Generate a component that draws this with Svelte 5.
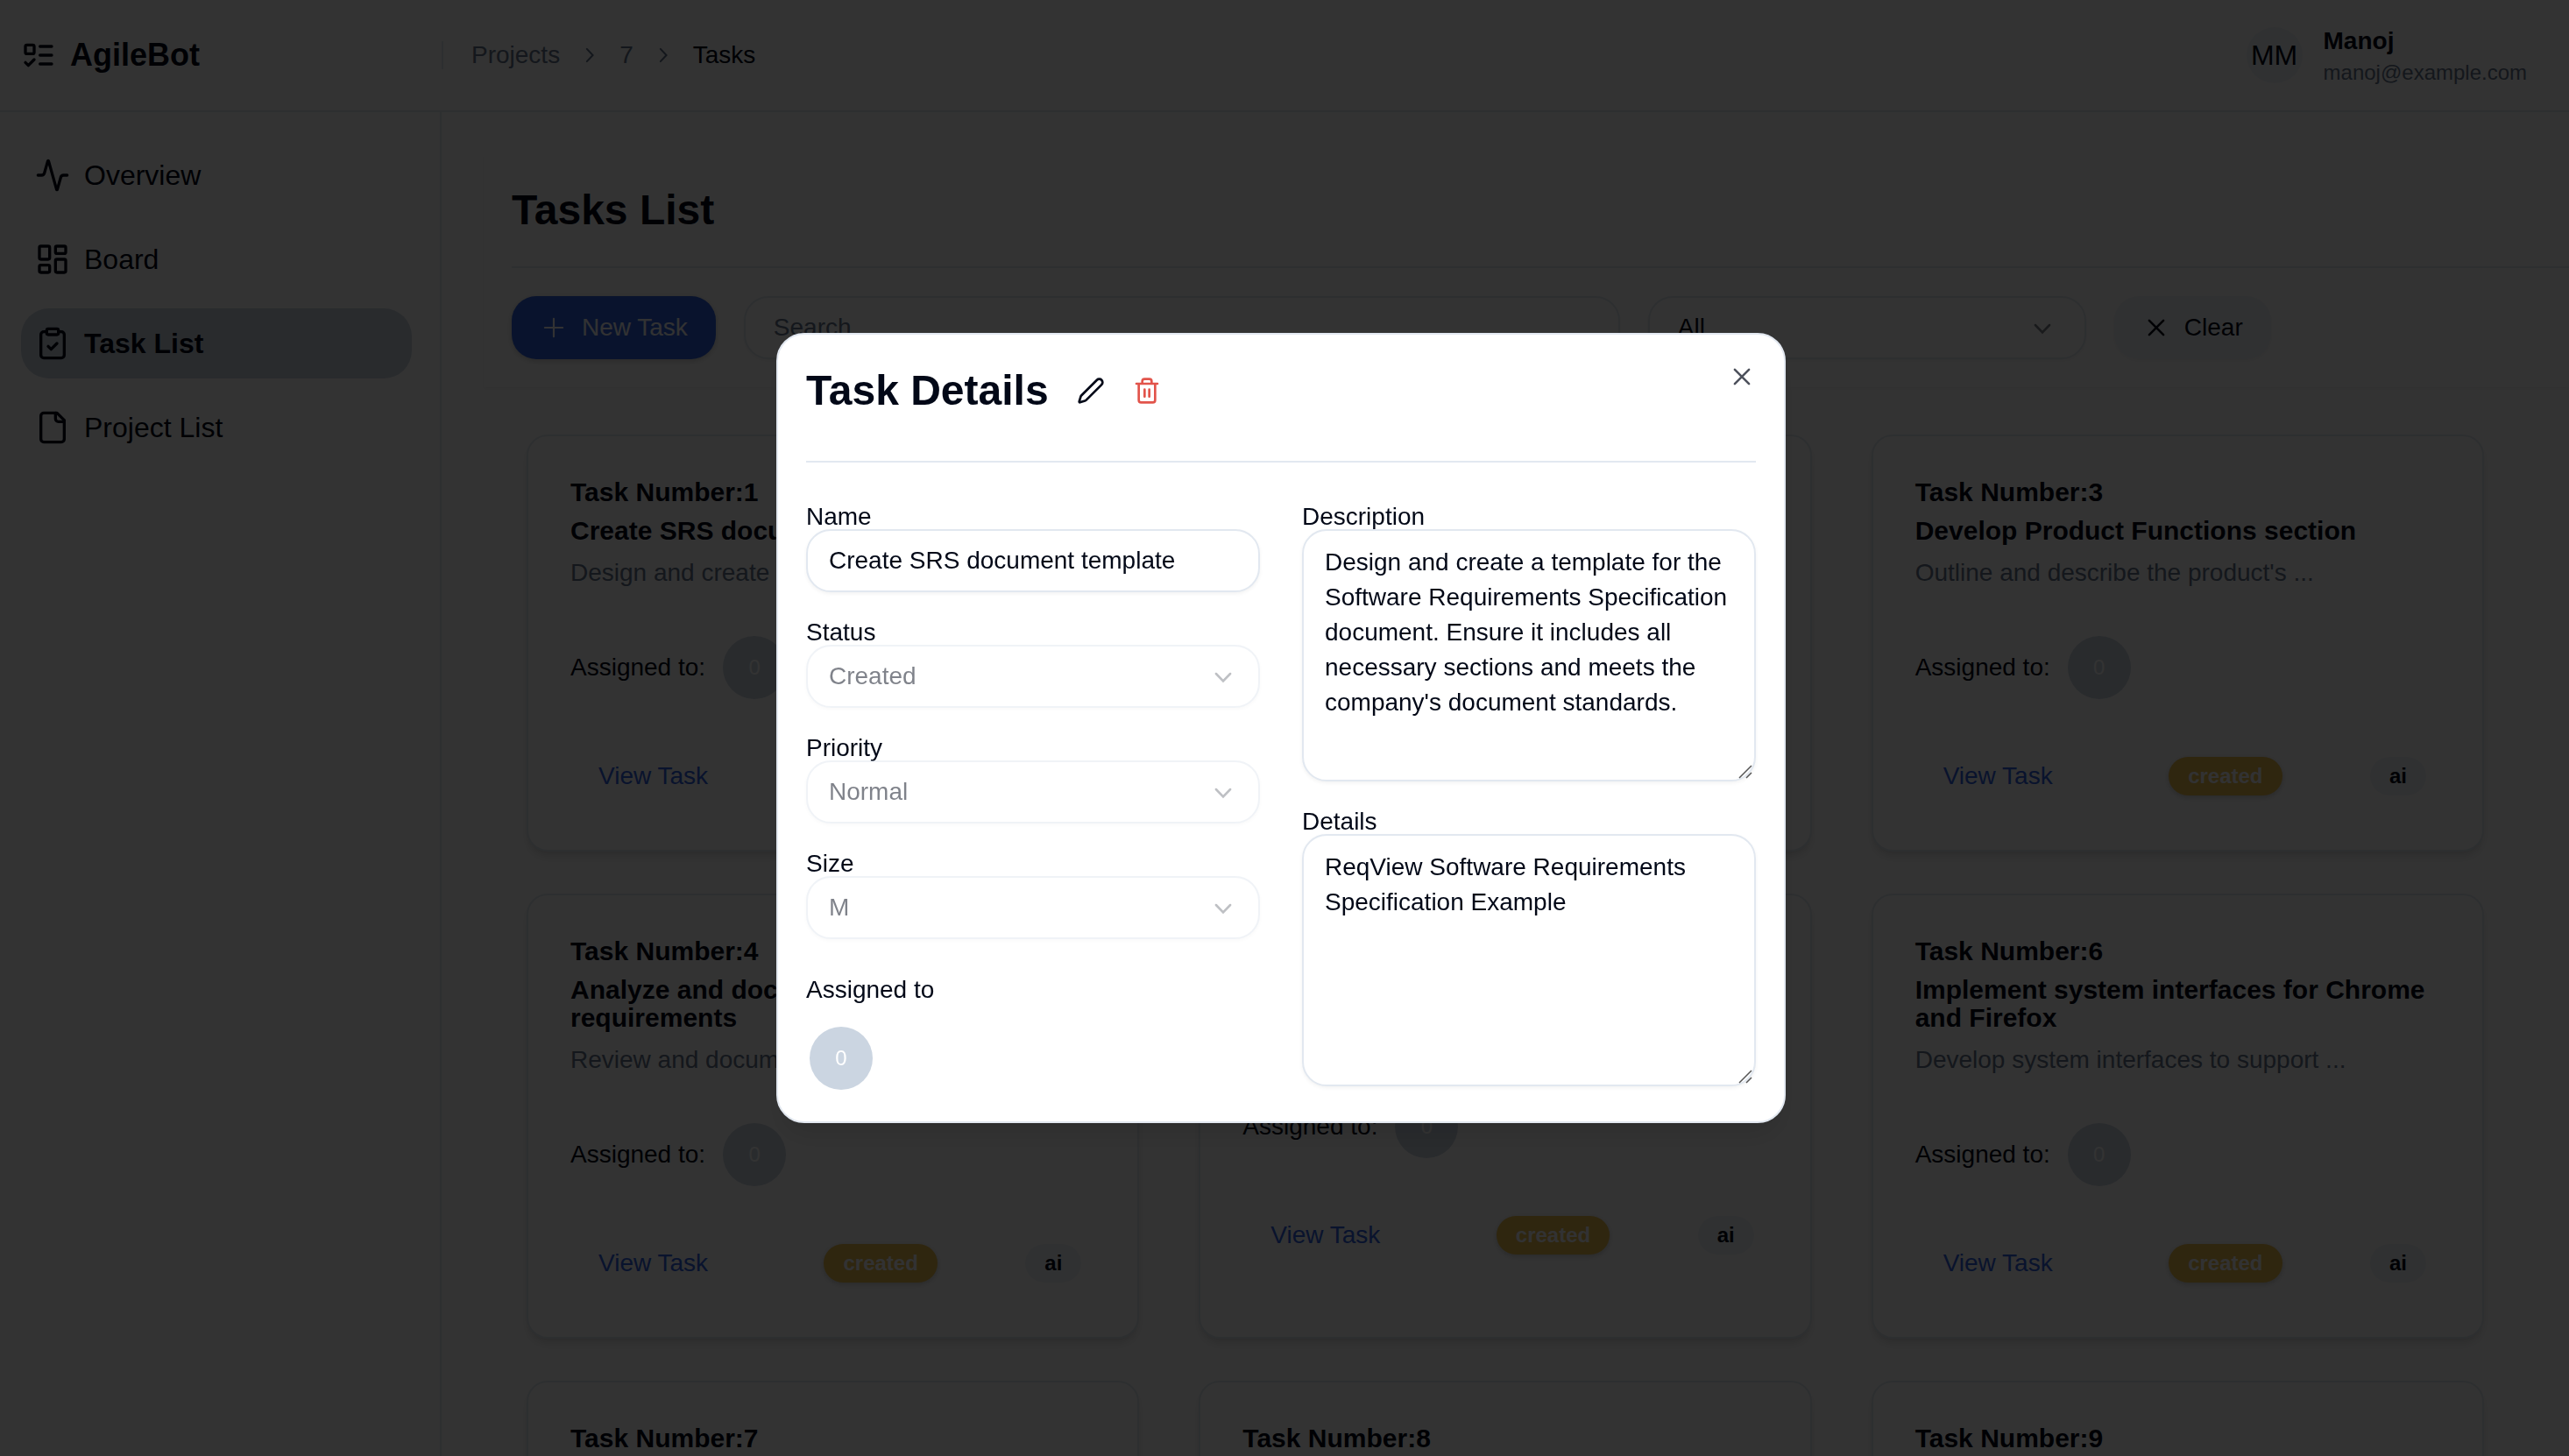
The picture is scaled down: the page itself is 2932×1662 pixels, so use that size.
<script>
  const nav = [
    { label: 'Overview', icon: 'activity' },
    { label: 'Board', icon: 'board' },
    { label: 'Task List', icon: 'clipboard', active: true },
    { label: 'Project List', icon: 'file' }
  ];

  const tasks = [
    { id: 1, name: 'Create SRS document template', text: 'Design and create a template for ...' },
    { id: 2, name: 'Define product perspective', text: 'Describe the product context ...' },
    { id: 3, name: 'Develop Product Functions section', text: "Outline and describe the product's ..." },
    { id: 4, name: 'Analyze and document user interface requirements', text: 'Review and document the user ...' },
    { id: 5, name: 'Specify hardware interfaces', text: 'List the supported hardware ...' },
    { id: 6, name: 'Implement system interfaces for Chrome and Firefox', text: 'Develop system interfaces to support ...' },
    { id: 7, name: 'Document memory constraints', text: 'Record the memory limits ...' },
    { id: 8, name: 'Describe user characteristics', text: 'Summarize the intended users ...' },
    { id: 9, name: 'Define functional requirements', text: 'Collect and write down the ...' }
  ];

  const choices = [
    { id: 'status', label: 'Status', value: 'Created' },
    { id: 'priority', label: 'Priority', value: 'Normal' },
    { id: 'size', label: 'Size', value: 'M' }
  ];

  const description =
    "Design and create a template for the Software Requirements Specification document. Ensure it includes all necessary sections and meets the company's document standards.";
  const details = 'ReqView Software Requirements Specification Example';
</script>

{#snippet chevronDown()}
  <svg class="chevron" viewBox="0 0 15 15" aria-hidden="true">
    <path d="M3.7 6.1 7.5 10 11.3 6.1" fill="none" stroke="currentColor" stroke-width="1.2" stroke-linecap="round" />
  </svg>
{/snippet}

{#snippet chevronRight()}
  <svg class="crumb-icon" viewBox="0 0 15 15" aria-hidden="true">
    <path d="M5.8 3.7 9.4 7.5 5.8 11.3" fill="none" stroke="currentColor" stroke-width="1.1" stroke-linecap="round" />
  </svg>
{/snippet}

{#snippet cross()}
  <svg class="icon-sm" viewBox="0 0 15 15" aria-hidden="true">
    <path d="M3.7 3.7 11.3 11.3M11.3 3.7 3.7 11.3" fill="none" stroke="currentColor" stroke-width="1.2" stroke-linecap="round" />
  </svg>
{/snippet}

{#snippet grip()}
  <svg class="grip" viewBox="0 0 16 16" aria-hidden="true">
    <path d="M1 15 15 1M9 15 15 9" fill="none" stroke="#555" stroke-width="1.5" />
  </svg>
{/snippet}

<div class="app">
  <header class="topbar">
    <a class="brand" href="#home">
      <svg class="icon" viewBox="0 0 24 24" aria-hidden="true">
        <rect x="3" y="5" width="6" height="6" rx="1" />
        <path d="m3 17 2 2 4-4M13 6h8M13 12h8M13 18h8" />
      </svg>
      <span>AgileBot</span>
    </a>
    <nav class="crumbs" aria-label="Breadcrumb">
      <a href="#projects">Projects</a>
      {@render chevronRight()}
      <a href="#project-7">7</a>
      {@render chevronRight()}
      <span class="current">Tasks</span>
    </nav>
    <div class="user">
      <span class="initials">MM</span>
      <div class="who">
        <span class="user-name">Manoj</span>
        <span class="user-mail">manoj@example.com</span>
      </div>
    </div>
  </header>

  <div class="body">
    <nav class="sidebar" aria-label="Main">
      {#each nav as item}
        <a class="nav-item" class:active={item.active} href="#{item.icon}">
          <svg class="icon" viewBox="0 0 24 24" aria-hidden="true">
            {#if item.icon === 'activity'}
              <path d="M22 12h-2.48a2 2 0 0 0-1.93 1.46l-2.35 8.36a.25.25 0 0 1-.48 0L9.24 2.18a.25.25 0 0 0-.48 0l-2.35 8.36A2 2 0 0 1 4.49 12H2" />
            {:else if item.icon === 'board'}
              <rect width="7" height="9" x="3" y="3" rx="1" />
              <rect width="7" height="5" x="14" y="3" rx="1" />
              <rect width="7" height="9" x="14" y="12" rx="1" />
              <rect width="7" height="5" x="3" y="16" rx="1" />
            {:else if item.icon === 'clipboard'}
              <rect width="8" height="4" x="8" y="2" rx="1" />
              <path d="M16 4h2a2 2 0 0 1 2 2v14a2 2 0 0 1-2 2H6a2 2 0 0 1-2-2V6a2 2 0 0 1 2-2h2M9 14l2 2 4-4" />
            {:else}
              <path d="M15 2H6a2 2 0 0 0-2 2v16a2 2 0 0 0 2 2h12a2 2 0 0 0 2-2V7Z" />
              <path d="M14 2v4a2 2 0 0 0 2 2h4" />
            {/if}
          </svg>
          <span>{item.label}</span>
        </a>
      {/each}
    </nav>

    <main>
      <section class="toolbar">
        <h1>Tasks List</h1>
        <hr />
        <div class="filters">
          <button class="btn primary" type="button">
            <svg class="icon-sm" viewBox="0 0 15 15" aria-hidden="true">
              <path d="M7.5 2.75v9.5M2.75 7.5h9.5" fill="none" stroke="currentColor" stroke-width="1" stroke-linecap="round" />
            </svg>
            New Task
          </button>
          <input class="field search" type="text" placeholder="Search..." aria-label="Search tasks" />
          <div class="select filter">
            <select class="field" aria-label="Filter tasks"><option>All</option></select>
            {@render chevronDown()}
          </div>
          <button class="btn secondary" type="button">{@render cross()} Clear</button>
        </div>
      </section>

      <section class="grid">
        {#each tasks as task}
          <article class="card">
            <div class="card-head">
              <h2>Task Number:{task.id}</h2>
              <h3>{task.name}</h3>
              <p>{task.text}</p>
            </div>
            <div class="assigned">
              <span>Assigned to:</span>
              <span class="avatar">0</span>
            </div>
            <div class="card-foot">
              <button class="btn link" type="button">View Task</button>
              <span class="badge created">created</span>
              <span class="badge">ai</span>
            </div>
          </article>
        {/each}
      </section>
    </main>
  </div>
</div>

<div class="overlay">
  <div class="dialog" role="dialog" aria-modal="true" aria-labelledby="dialog-title">
    <div class="dialog-head">
      <h2 id="dialog-title">Task Details</h2>
      <button class="icon-btn" type="button" aria-label="Edit task">
        <svg class="icon" viewBox="0 0 24 24" aria-hidden="true">
          <path d="M21.174 6.812a1 1 0 0 0-3.986-3.987L3.842 16.174a2 2 0 0 0-.5.83l-1.321 4.352a.5.5 0 0 0 .623.622l4.353-1.32a2 2 0 0 0 .83-.497z" />
        </svg>
      </button>
      <button class="icon-btn danger" type="button" aria-label="Delete task">
        <svg class="icon" viewBox="0 0 24 24" aria-hidden="true">
          <path d="M3 6h18M19 6v14a2 2 0 0 1-2 2H7a2 2 0 0 1-2-2V6M8 6V4a2 2 0 0 1 2-2h4a2 2 0 0 1 2 2v2M10 11v6M14 11v6" />
        </svg>
      </button>
    </div>
    <button class="icon-btn close" type="button" aria-label="Close">{@render cross()}</button>
    <hr />
    <form class="form">
      <div class="column">
        <div class="group">
          <label for="name">Name</label>
          <input class="field" id="name" type="text" value="Create SRS document template" />
        </div>
        {#each choices as choice}
          <div class="group">
            <label for={choice.id}>{choice.label}</label>
            <div class="select disabled">
              <select class="field" id={choice.id} disabled><option>{choice.value}</option></select>
              {@render chevronDown()}
            </div>
          </div>
        {/each}
        <div class="group people">
          <span>Assigned to</span>
          <span class="avatar">0</span>
        </div>
      </div>
      <div class="column">
        <div class="group">
          <label for="description">Description</label>
          <div class="area">
            <textarea class="field" id="description" value={description}></textarea>
            {@render grip()}
          </div>
        </div>
        <div class="group">
          <label for="details">Details</label>
          <div class="area">
            <textarea class="field" id="details" value={details}></textarea>
            {@render grip()}
          </div>
        </div>
      </div>
    </form>
  </div>
</div>

<style>
  :global(body) {
    overflow: hidden;
    background: #fff;
    color: #020817;
    font: 28px/40px 'Liberation Sans', Arial, sans-serif;
  }

  * {
    box-sizing: border-box;
  }

  h1, h2, h3, p {
    margin: 0;
  }

  hr {
    width: 100%;
    height: 2px;
    margin: 0;
    border: 0;
    background: #e2e8f0;
  }

  a {
    color: inherit;
    text-decoration: none;
  }

  button, input, select, textarea {
    margin: 0;
    color: inherit;
    font: inherit;
  }

  .icon {
    flex: none;
    width: 40px;
    height: 40px;
    fill: none;
    stroke: currentColor;
    stroke-width: 2;
    stroke-linecap: round;
    stroke-linejoin: round;
  }

  .icon-sm, .chevron {
    flex: none;
    width: 32px;
    height: 32px;
  }

  .app {
    display: flex;
    flex-direction: column;
    height: 100vh;
    overflow: hidden;
  }

  .topbar {
    flex: none;
    display: flex;
    align-items: center;
    height: 128px;
    padding-right: 48px;
    border-bottom: 2px solid #e2e8f0;
  }

  .brand {
    display: flex;
    align-items: center;
    gap: 16px;
    width: 504px;
    padding-left: 24px;
    font-size: 36px;
    font-weight: 700;
  }

  .crumbs {
    display: flex;
    align-items: center;
    gap: 20px;
    height: 32px;
    padding-left: 32px;
    border-left: 2px solid #e2e8f0;
    color: #64748b;
  }

  .crumb-icon {
    width: 28px;
    height: 28px;
  }

  .current {
    color: #020817;
  }

  .user {
    display: flex;
    align-items: center;
    gap: 24px;
    margin-left: auto;
  }

  .initials {
    display: grid;
    place-items: center;
    width: 64px;
    height: 64px;
    border-radius: 50%;
    background: #f1f5f9;
    font-size: 32px;
  }

  .who {
    display: flex;
    flex-direction: column;
    gap: 8px;
    padding-top: 4px;
    line-height: 28px;
  }

  .user-name {
    font-weight: 700;
  }

  .user-mail {
    color: #64748b;
    font-size: 24px;
  }

  .body {
    display: flex;
    flex: 1;
    min-height: 0;
  }

  .sidebar {
    flex: none;
    display: flex;
    flex-direction: column;
    gap: 16px;
    width: 504px;
    padding: 32px 32px 32px 24px;
    border-right: 2px solid #e2e8f0;
    font-size: 32px;
  }

  .nav-item {
    display: flex;
    align-items: center;
    gap: 16px;
    height: 80px;
    padding: 0 16px;
    border-radius: 32px;
  }

  .nav-item.active {
    background: #cbd5e1;
    font-weight: 700;
  }

  main {
    flex: 1;
    min-width: 0;
    padding: 48px 0 0 48px;
    overflow: hidden;
  }

  .toolbar {
    display: flex;
    flex-direction: column;
    gap: 32px;
    padding: 32px 0 32px 32px;
    box-shadow: 0 2px 4px rgba(0, 0, 0, 0.05);
  }

  h1, .dialog-head h2 {
    font-size: 48px;
    line-height: 64px;
  }

  .filters {
    display: flex;
    gap: 32px;
    padding-right: 32px;
  }

  .btn {
    display: flex;
    flex: none;
    align-items: center;
    gap: 16px;
    height: 72px;
    padding: 0 32px;
    border: 0;
    border-radius: 28px;
    background: none;
    box-shadow: 0 2px 4px rgba(0, 0, 0, 0.05);
  }

  .btn.primary {
    background: #3062e0;
    color: #f8fafc;
    box-shadow: 0 2px 6px rgba(0, 0, 0, 0.2);
  }

  .btn.secondary {
    background: #f1f5f9;
  }

  .btn.link {
    color: #3062e0;
    box-shadow: none;
  }

  .field {
    display: block;
    width: 100%;
    height: 72px;
    padding: 0 24px;
    border: 2px solid #e2e8f0;
    border-radius: 28px;
    outline: none;
    appearance: none;
    background: #fff;
    box-shadow: 0 2px 4px rgba(0, 0, 0, 0.05);
  }

  .field::placeholder {
    color: #64748b;
    opacity: 1;
  }

  .filters .field {
    padding: 0 32px;
  }

  .filters .search {
    flex: 2;
    max-width: 1000px;
  }

  .filter {
    flex: 1;
    max-width: 500px;
  }

  .select, .area {
    position: relative;
  }

  .select select:disabled {
    color: inherit;
    opacity: 1;
  }

  .select.disabled {
    opacity: 0.5;
  }

  .chevron {
    position: absolute;
    top: 20px;
    right: 26px;
    opacity: 0.5;
    pointer-events: none;
  }

  .filter .chevron {
    right: 34px;
  }

  .grid {
    display: grid;
    grid-template-columns: repeat(3, minmax(0, 1fr));
    gap: 48px 68px;
    padding: 54px 97px 48px 49px;
  }

  .card {
    padding: 48px;
    border: 2px solid #e2e8f0;
    border-radius: 24px;
    background: #fff;
    box-shadow: 0 8px 12px -2px rgba(0, 0, 0, 0.1), 0 4px 8px -4px rgba(0, 0, 0, 0.1);
  }

  .card-head {
    display: flex;
    flex-direction: column;
    gap: 12px;
    margin-bottom: 48px;
  }

  .card h2, .card h3 {
    font-size: 30px;
    line-height: 32px;
  }

  .card p {
    color: #64748b;
  }

  .assigned {
    display: flex;
    align-items: center;
    gap: 16px;
    margin-bottom: 48px;
  }

  .avatar {
    display: grid;
    place-items: center;
    width: 72px;
    height: 72px;
    margin: 4px;
    border-radius: 50%;
    background: #cbd5e1;
    color: #fff;
    font-size: 24px;
  }

  .card-foot {
    display: flex;
    align-items: center;
    justify-content: space-between;
    padding-right: 16px;
  }

  .badge {
    padding: 6px 22px;
    border-radius: 22px;
    background: #f1f5f9;
    font-size: 24px;
    font-weight: 700;
    line-height: 32px;
  }

  .badge.created {
    background: #ecbc4a;
    color: #f8fafc;
    box-shadow: 0 2px 6px rgba(0, 0, 0, 0.2);
  }

  .overlay {
    position: fixed;
    inset: 0;
    display: flex;
    align-items: center;
    justify-content: center;
    padding-right: 8px;
    background: rgba(0, 0, 0, 0.8);
  }

  .dialog {
    position: relative;
    width: 100%;
    max-width: 1152px;
    padding: 32px;
    border: 2px solid #e2e8f0;
    border-radius: 32px;
    background: #fff;
    box-shadow: 0 20px 30px -6px rgba(0, 0, 0, 0.1), 0 8px 12px -8px rgba(0, 0, 0, 0.1);
  }

  .dialog-head {
    display: flex;
    align-items: center;
    gap: 32px;
    margin-bottom: 48px;
  }

  .icon-btn {
    display: flex;
    padding: 0;
    border: 0;
    background: none;
  }

  .icon-btn .icon {
    width: 32px;
    height: 32px;
  }

  .danger {
    color: #e2544b;
  }

  .close {
    position: absolute;
    top: 32px;
    right: 32px;
    opacity: 0.7;
  }

  .form {
    display: grid;
    grid-template-columns: 1fr 1fr;
    gap: 48px;
    margin-top: 48px;
  }

  .column {
    display: flex;
    flex-direction: column;
    gap: 32px;
  }

  .group {
    display: flex;
    flex-direction: column;
    line-height: 28px;
  }

  .people {
    gap: 24px;
    margin-top: 12px;
  }

  textarea.field {
    height: 288px;
    padding: 16px 24px;
    line-height: 40px;
    resize: none;
  }

  .grip {
    position: absolute;
    right: 4px;
    bottom: 3px;
    width: 16px;
    height: 16px;
    pointer-events: none;
  }
</style>
